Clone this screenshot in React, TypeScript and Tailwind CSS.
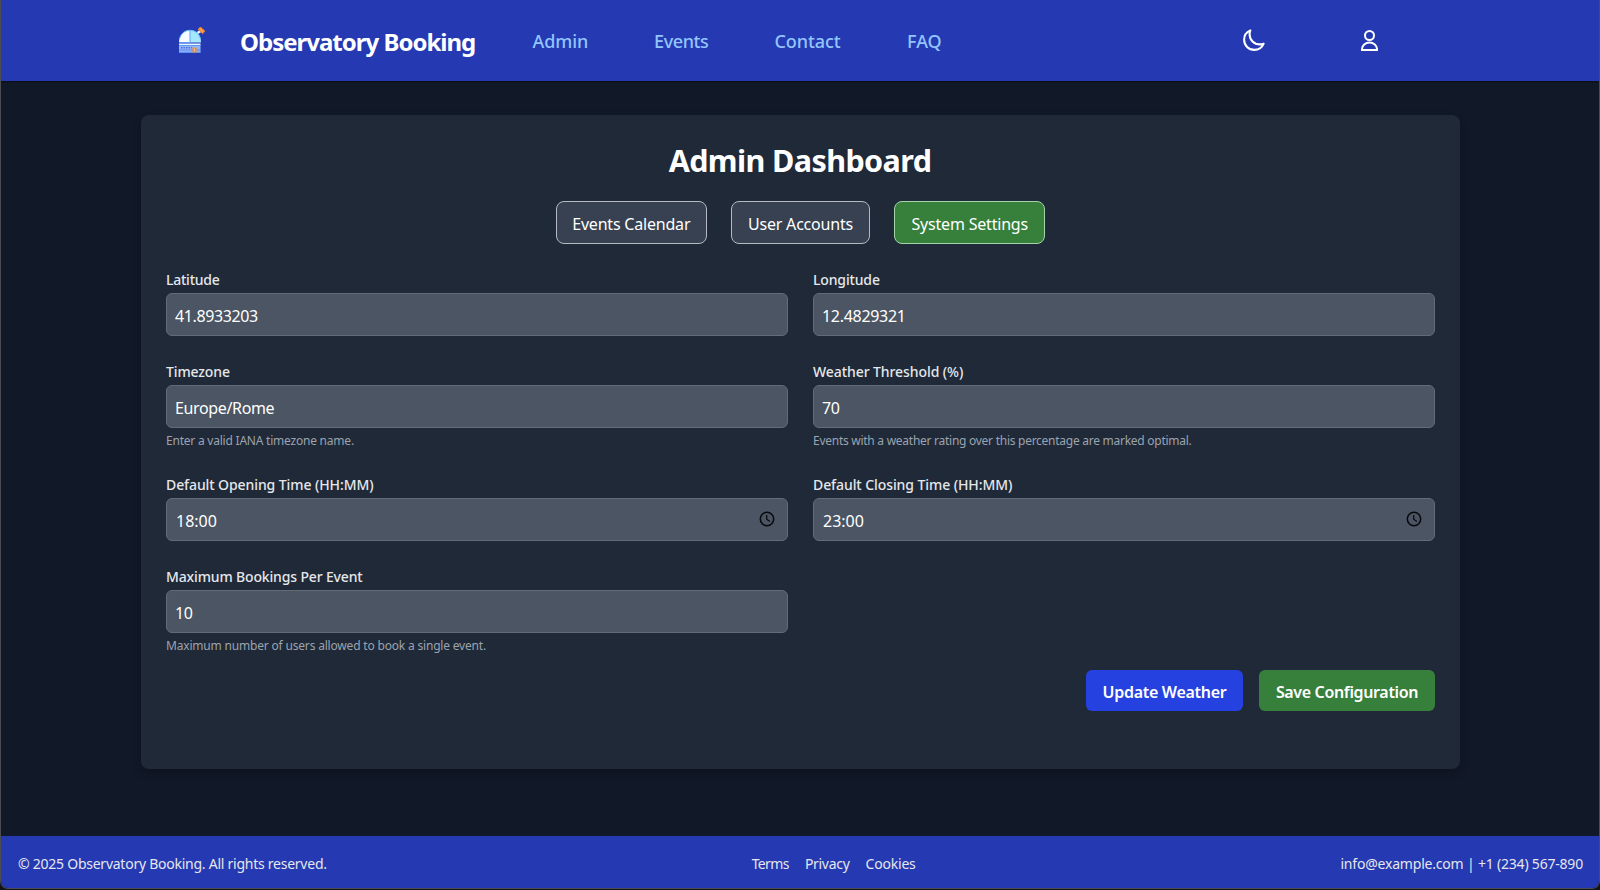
import React from "react";

type FieldProps = {
  label: string;
  labelClass: string;
  value: string;
  valueClass: string;
  hint?: string;
  hintClass?: string;
  time?: boolean;
};

function ClockIcon() {
  return (
    <svg className="mb-px" width="16" height="16" viewBox="0 0 16 16" fill="none" stroke="#07090c" strokeWidth="1.5">
      <circle cx="8" cy="8" r="6.7" />
      <path d="M7.7 4v4.2l3.2 2.2" strokeWidth="1.2" />
    </svg>
  );
}

function Field({ label, labelClass, value, valueClass, hint, hintClass, time }: FieldProps) {
  return (
    <div>
      <div className={`h-[21px] pt-px text-[14px] leading-[20px] font-medium text-[#e5e7eb] whitespace-nowrap ${labelClass}`}>{label}</div>
      <div className="mt-[3px] flex h-[43px] items-center justify-between rounded-[6px] border border-[#636b79] bg-[#4b5563] pl-[8px] pr-[12px] text-[16px] text-white">
        <span className={`pt-[2px] whitespace-nowrap ${valueClass}`}>{value}</span>
        {time && <ClockIcon />}
      </div>
      {hint && <div className={`mt-[4px] h-[17px] text-[12px] leading-[18px] text-[#9ca3af] whitespace-nowrap ${hintClass}`}>{hint}</div>}
    </div>
  );
}

function Logo() {
  return (
    <svg width="28" height="28" viewBox="0 0 28 28">
      <path d="M1 15.5C1 8 6 3.5 12 3v12.5z" fill="#f8fbff" />
      <path d="M12 3c7 0 11 5 11 12.500H12z" fill="#a5e8fd" />
      <path d="M1.500 12C3 6 7 3.300 12 3.300S21 6.500 22.500 12" fill="none" stroke="#60b8fb" strokeWidth="1" />
      <path d="M12 3v13" stroke="#60a5fa" strokeWidth="1" />
      <path d="M1 16.500h21.500v1.500H1z" fill="#eaf4ff" />
      <path d="M1 18h21.500v7.500H1z" fill="#93b4fb" />
      <path d="M1 15.500h10M1 18.500h21.500M1 25.300h21.500" stroke="#5b9bf8" strokeWidth="1" />
      <path d="M3 20.800h11" stroke="#3151c9" strokeWidth="1" strokeDasharray="1.500 1" />
      <path d="M1 23h21.500" stroke="#5a7fe8" strokeWidth=".8" />
      <path d="M14.500 20.500h4v5h-4z" fill="#f58a2c" />
      <path d="M16.500 21.500v3" stroke="#ffd1a0" strokeWidth=".8" />
      <path d="M19.500 6l3-2" stroke="#e6f4ff" strokeWidth="2.500" />
      <path d="M21 1l5 4.500" stroke="#f58a2c" strokeWidth="4" />
      <path d="M22.500 1.800l2 3" stroke="#ffc18a" strokeWidth="1" />
    </svg>
  );
}

export default function App() {
  return (
    <div className="h-[890px] w-[1600px] overflow-hidden bg-[#111318] font-['Noto_Sans',sans-serif]">
      <div className="flex h-[889px] flex-col overflow-hidden rounded-b-[8px] border-x border-b border-[#4b4c50] bg-[#111827]">
        <header className="flex h-[81px] shrink-0 items-center bg-[#2439b2] pb-px shadow-[0_1px_1px_#0c0f16]">
          <div className="ml-[177px] flex w-[62px] pt-[2px]"><Logo /></div>
          <div className="w-[292.500px] pt-[4px] text-[24px] font-bold tracking-[-1px] text-white whitespace-nowrap">Observatory Booking</div>
          <nav className="flex pt-[2px] text-[18px] font-medium text-[#93c5fd]">
            <span className="w-[121.500px] tracking-[-0.100px]">Admin</span>
            <span className="w-[120.500px] tracking-[-0.400px]">Events</span>
            <span className="w-[132.500px] tracking-[-0.100px]">Contact</span>
            <span>FAQ</span>
          </nav>
          <div className="ml-auto mr-[217px] flex items-center gap-[91px] text-white">
            <svg width="25" height="25" viewBox="0 0 24 24" fill="none" stroke="currentColor" strokeWidth="2" strokeLinecap="round" strokeLinejoin="round">
              <path d="M21.752 15.002A9.720 9.720 0 0 1 18 15.750c-5.385 0-9.750-4.365-9.750-9.750 0-1.330.266-2.597.748-3.752A9.753 9.753 0 0 0 3 11.250C3 16.635 7.365 21 12.750 21a9.753 9.753 0 0 0 9.002-5.998Z" />
            </svg>
            <svg width="25" height="25" viewBox="0 0 25 25" fill="none" stroke="currentColor" strokeWidth="2">
              <circle cx="12.500" cy="7.500" r="4.500" />
              <path d="M5 22v-1a7.500 6.500 0 0 1 15 0v1z" />
            </svg>
          </div>
        </header>

        <main className="ml-[140px] mt-[34px] h-[654px] w-[1319px] shrink-0 rounded-[8px] bg-[#1f2937] px-[25px] shadow-[0_4px_10px_rgba(0,0,0,0.2)]">
          <h1 className="h-[86px] pt-[23px] pr-px text-center text-[30.500px] leading-[44px] font-bold tracking-[-0.600px] text-white">Admin Dashboard</h1>
          <div className="flex justify-center gap-[24.500px] text-[16px] text-white">
            <button className="h-[43px] w-[151px] rounded-[8px] border border-[#b4b9c2] bg-[#374151] pt-[3px] tracking-[-0.200px]">Events Calendar</button>
            <button className="h-[43px] w-[138.500px] rounded-[8px] border border-[#b4b9c2] bg-[#374151] pt-[3px] tracking-[-0.200px]">User Accounts</button>
            <button className="h-[43px] w-[151px] rounded-[8px] border border-[#a3d3a8] bg-[#37803c] pt-[3px] tracking-[-0.200px]">System Settings</button>
          </div>

          <div className="mt-[25px] grid grid-cols-2 grid-rows-[92px_113px_92px_92px] gap-x-[25px]">
            <Field label="Latitude" labelClass="tracking-[-0.250px]" value="41.8933203" valueClass="tracking-[-0.380px]" />
            <Field label="Longitude" labelClass="tracking-[-0.150px]" value="12.4829321" valueClass="tracking-[-0.300px]" />
            <Field label="Timezone" labelClass="tracking-[-0.130px]" value="Europe/Rome" valueClass="tracking-[-0.360px]" hint="Enter a valid IANA timezone name." hintClass="tracking-[-0.220px]" />
            <Field label="Weather Threshold (%)" labelClass="tracking-[-0.080px]" value="70" valueClass="tracking-[-0.300px]" hint="Events with a weather rating over this percentage are marked optimal." hintClass="tracking-[-0.265px]" />
            <Field label="Default Opening Time (HH:MM)" labelClass="tracking-[-0.090px]" value="18:00" valueClass="pl-px" time />
            <Field label="Default Closing Time (HH:MM)" labelClass="tracking-[-0.080px]" value="23:00" valueClass="pl-px" time />
            <Field label="Maximum Bookings Per Event" labelClass="tracking-[-0.150px]" value="10" valueClass="tracking-[-0.300px]" hint="Maximum number of users allowed to book a single event." hintClass="tracking-[-0.185px]" />
          </div>

          <div className="mt-[12px] flex justify-end gap-[16px] text-[16px] font-semibold text-white">
            <button className="h-[41px] w-[157px] rounded-[6px] bg-[#2542e0] pt-[2px] tracking-[-0.300px]">Update Weather</button>
            <button className="h-[41px] w-[176px] rounded-[6px] bg-[#37803c] pt-[2px] tracking-[-0.350px]">Save Configuration</button>
          </div>
        </main>

        <footer className="mt-auto flex h-[52px] shrink-0 items-center justify-between bg-[#2439b2] pl-[17px] pr-[16px] pt-[3px] text-[14px] text-[#e5e7eb]">
          <span className="tracking-[-0.250px]">© 2025 Observatory Booking. All rights reserved.</span>
          <div className="flex gap-[16px]">
            <span className="tracking-[-0.600px]">Terms</span>
            <span className="tracking-[-0.300px]">Privacy</span>
            <span className="tracking-[-0.200px]">Cookies</span>
          </div>
          <span className="tracking-[-0.200px]">info@example.com | +1 (234) 567-890</span>
        </footer>
      </div>
    </div>
  );
}
